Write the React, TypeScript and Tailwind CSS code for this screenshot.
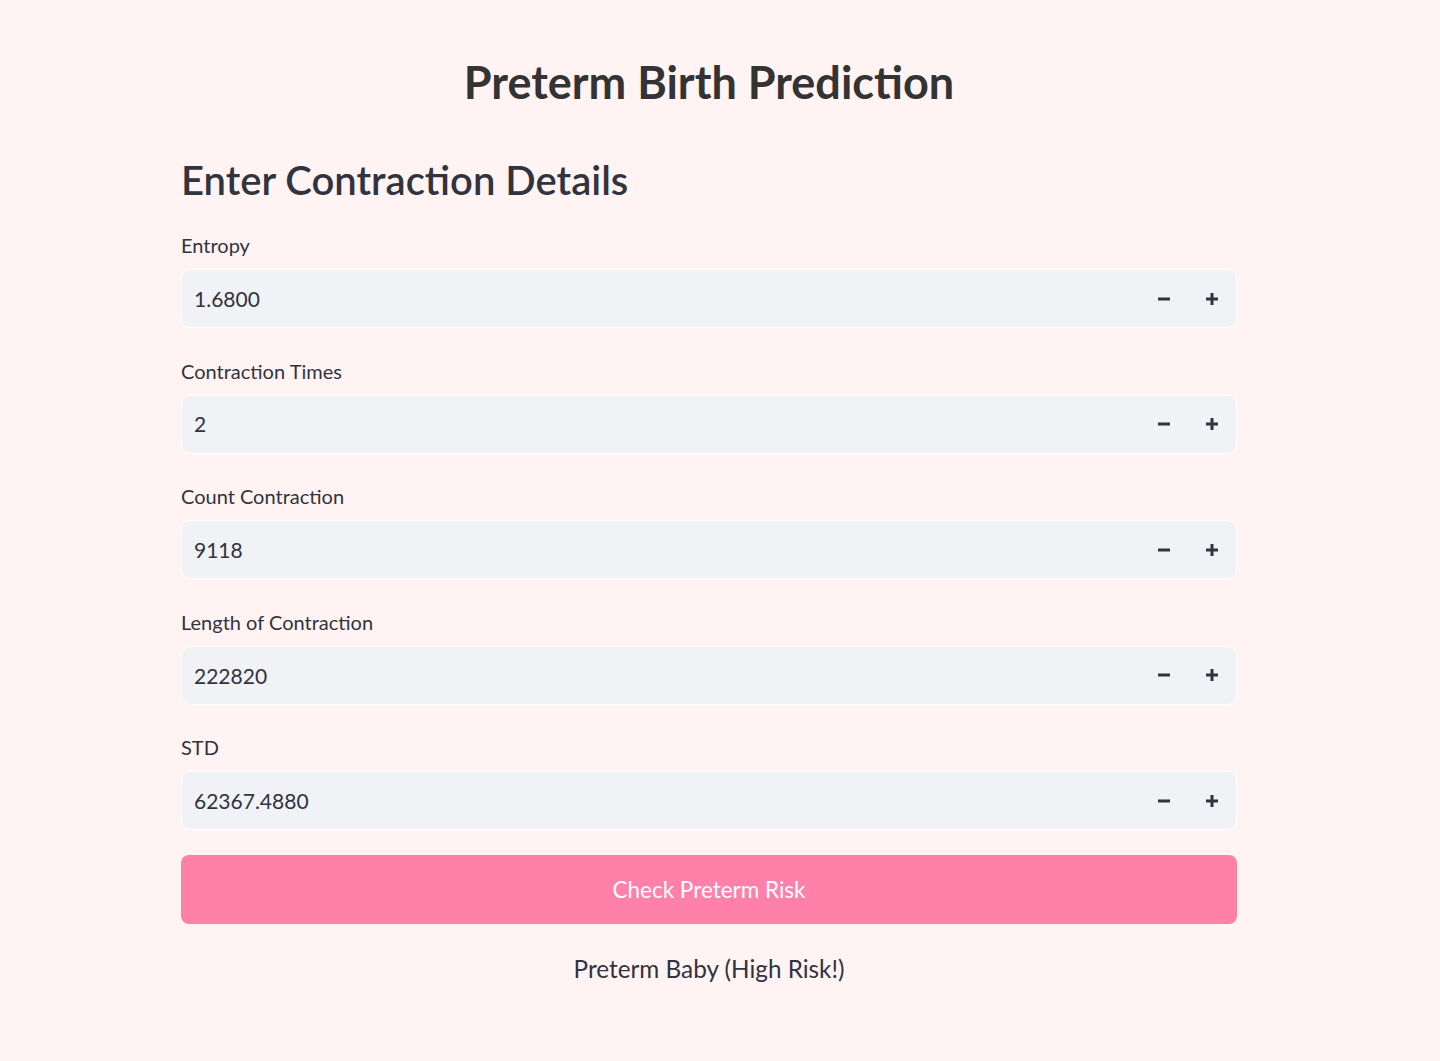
import React from 'react';

const fields = [
  { label: 'Entropy', value: '1.6800' },
  { label: 'Contraction Times', value: '2' },
  { label: 'Count Contraction', value: '9118' },
  { label: 'Length of Contraction', value: '222820' },
  { label: 'STD', value: '62367.4880' },
];

const Minus = () => (
  <svg width="14" height="14" viewBox="0 0 14 14">
    <rect x="1" y="5.5" width="12" height="3" fill="#31333f" />
  </svg>
);

const Plus = () => (
  <svg width="14" height="14" viewBox="0 0 14 14">
    <rect x="1" y="5.5" width="12" height="3" fill="#31333f" />
    <rect x="5.5" y="1" width="3" height="12" fill="#31333f" />
  </svg>
);

const NumberField: React.FC<{ label: string; value: string; first?: boolean }> = ({ label, value, first }) => (
  <div className={first ? 'mt-[33px]' : 'mt-[32.6px]'}>
    <label className="block text-[20px] leading-[20px] text-[#31333f]">{label}</label>
    <div className="mt-[14px] flex h-[59px] items-center rounded-[9px] border border-white bg-[#f0f2f6]">
      <span className="flex-1 pl-[12px] text-[21px] text-[#31333f]">{value}</span>
      <button className="flex h-full w-[48px] items-center justify-center">
        <Minus />
      </button>
      <button className="flex h-full w-[48px] items-center justify-center">
        <Plus />
      </button>
    </div>
  </div>
);

export default function App() {
  return (
    <div className="min-h-[1061px] bg-[#fff4f3] font-['Lato',sans-serif]">
      <div className="w-[1418px]">
        <div className="mx-auto w-[1056px] pb-10">
          <h1 className="pt-[56px] text-center text-[45px] font-bold leading-[53px] text-[#333333]">
            Preterm Birth Prediction
          </h1>
          <h2 className="mt-[49px] text-[40px] font-semibold leading-[44px] text-[#31333f]">
            Enter Contraction Details
          </h2>
          {fields.map((f, i) => (
            <NumberField key={f.label} label={f.label} value={f.value} first={i === 0} />
          ))}
          <button className="mt-[25px] flex h-[69px] w-full items-center justify-center rounded-lg bg-[#ff80a9] text-[22.5px] text-white">
            Check Preterm Risk
          </button>
          <p className="mt-[31px] text-center text-[24.3px] leading-[28px] text-[#31333f]">
            Preterm Baby (High Risk!)
          </p>
        </div>
      </div>
    </div>
  );
}
